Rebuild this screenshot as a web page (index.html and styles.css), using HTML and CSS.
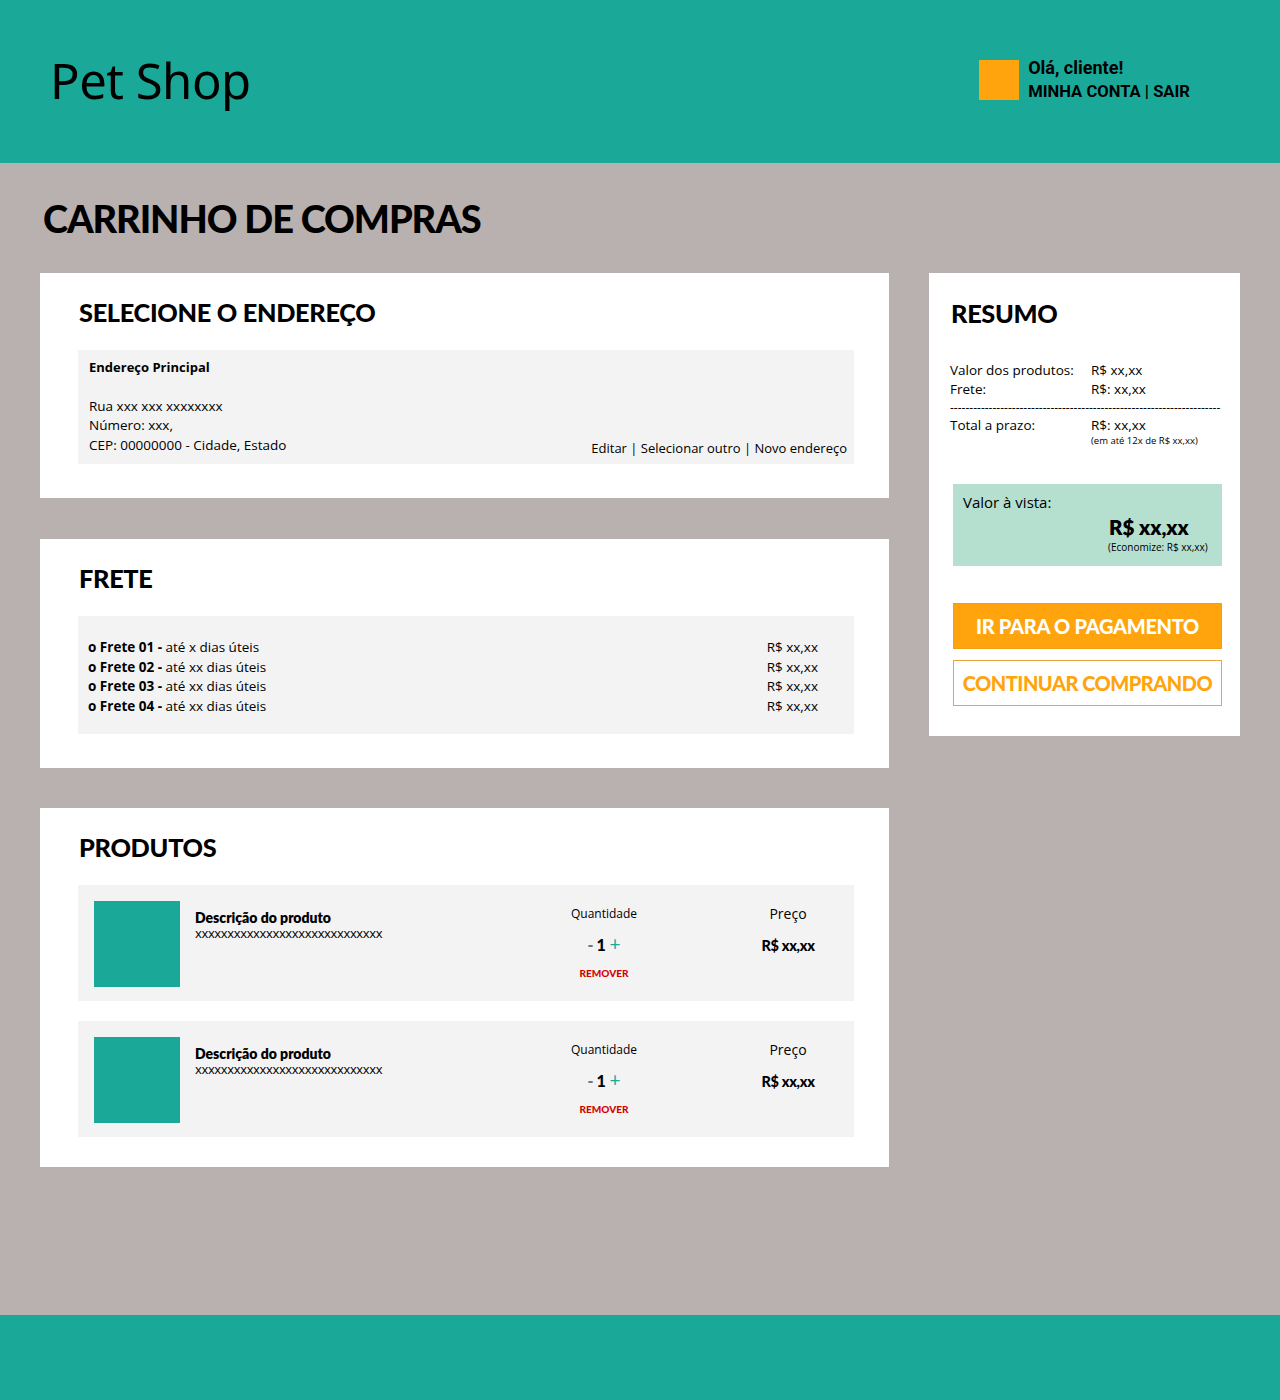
FILE: index.html
```html
<!DOCTYPE html>
<html lang="pt-BR">
<head>
<meta charset="utf-8">
<title>Pet Shop - Carrinho</title>
<link rel="stylesheet" href="styles.css">
</head>
<body>
<header class="topbar">
  <div class="logo">Pet Shop</div>
  <div class="user">
    <div class="avatar"></div>
    <div class="user-text">
      <div>Olá, cliente!</div>
      <div>MINHA CONTA | SAIR</div>
    </div>
  </div>
</header>

<main class="page">
  <h1 class="page-title">CARRINHO DE COMPRAS</h1>
  <div class="layout">
    <div class="left">
      <section class="card">
        <h2 class="card-title">SELECIONE O ENDEREÇO</h2>
        <div class="box address">
          <div class="addr-text">
            <div class="addr-name">Endereço Principal</div>
            <div class="addr-lines">
              <div>Rua xxx xxx xxxxxxxx</div>
              <div>Número: xxx,</div>
              <div>CEP: 00000000 - Cidade, Estado</div>
            </div>
          </div>
          <div class="addr-actions">Editar | Selecionar outro | Novo endereço</div>
        </div>
      </section>

      <section class="card">
        <h2 class="card-title">FRETE</h2>
        <div class="box frete">
          <div class="frete-row"><span><b>o Frete 01 -</b> até x dias úteis</span><span class="frete-price">R$ xx,xx</span></div>
          <div class="frete-row"><span><b>o Frete 02 -</b> até xx dias úteis</span><span class="frete-price">R$ xx,xx</span></div>
          <div class="frete-row"><span><b>o Frete 03 -</b> até xx dias úteis</span><span class="frete-price">R$ xx,xx</span></div>
          <div class="frete-row"><span><b>o Frete 04 -</b> até xx dias úteis</span><span class="frete-price">R$ xx,xx</span></div>
        </div>
      </section>

      <section class="card card-products">
        <h2 class="card-title">PRODUTOS</h2>
        <div class="products">
          <div class="box product">
            <div class="thumb"></div>
            <div class="prod-desc">
              <div class="prod-name">Descrição do produto</div>
              <div class="prod-sub">xxxxxxxxxxxxxxxxxxxxxxxxxxxxx</div>
            </div>
            <div class="qty">
              <div class="col-label">Quantidade</div>
              <div class="qty-ctrl"><span class="minus">-</span>1 <span class="plus">+</span></div>
              <div class="remove">REMOVER</div>
            </div>
            <div class="price">
              <div class="col-label price-label">Preço</div>
              <div class="price-val">R$ xx,xx</div>
            </div>
          </div>
          <div class="box product">
            <div class="thumb"></div>
            <div class="prod-desc">
              <div class="prod-name">Descrição do produto</div>
              <div class="prod-sub">xxxxxxxxxxxxxxxxxxxxxxxxxxxxx</div>
            </div>
            <div class="qty">
              <div class="col-label">Quantidade</div>
              <div class="qty-ctrl"><span class="minus">-</span>1 <span class="plus">+</span></div>
              <div class="remove">REMOVER</div>
            </div>
            <div class="price">
              <div class="col-label price-label">Preço</div>
              <div class="price-val">R$ xx,xx</div>
            </div>
          </div>
        </div>
      </section>
    </div>

    <aside class="card summary">
      <h2 class="card-title summary-title">RESUMO</h2>
      <div class="sum-rows">
        <div class="sum-row"><span>Valor dos produtos:</span><span>R$ xx,xx</span></div>
        <div class="sum-row"><span>Frete:</span><span>R$: xx,xx</span></div>
      </div>
      <div class="dashes">----------------------------------------------------------------------</div>
      <div class="sum-row total"><span>Total a prazo:</span><span>R$: xx,xx<small>(em até 12x de R$ xx,xx)</small></span></div>
      <div class="avista">
        <div class="avista-label">Valor à vista:</div>
        <div class="avista-val">R$ xx,xx</div>
        <div class="avista-save">(Economize: R$ xx,xx)</div>
      </div>
      <button class="btn btn-primary">IR PARA O PAGAMENTO</button>
      <button class="btn btn-outline">CONTINUAR COMPRANDO</button>
    </aside>
  </div>
</main>

<footer class="footer"></footer>
</body>
</html>
```

FILE: styles.css
```css
* { box-sizing: border-box; }
html, body { margin: 0; padding: 0; }
body {
  font-family: "Open Sans", "Noto Sans", sans-serif;
  background: #b9b0b0;
  color: #000;
  min-height: 1400px;
  display: flex;
  flex-direction: column;
}

.topbar {
  background: #1aa999;
  height: 163px;
  display: flex;
  align-items: center;
  justify-content: space-between;
  padding: 0 90px 0 50px;
}
.logo {
  font-family: "Noto Sans", sans-serif;
  font-size: 49px;
  letter-spacing: -0.5px;
  margin-top: -4px;
}
.user { display: flex; align-items: center; gap: 9px; margin-top: -3px; }
.avatar { width: 40px; height: 40px; background: #ffa40d; }
.user-text { font-family: "Roboto", sans-serif; font-weight: 700; font-size: 16.6px; line-height: 24px; }
.user-text div:first-child { font-size: 18px; }

.page { flex: 1; padding: 0 40px 148px; }
.page-title {
  font-family: "Lato", sans-serif;
  font-weight: 900;
  font-size: 38px;
  letter-spacing: -1.1px;
  margin: 0;
  padding: 0 0 0 3px;
  height: 110px;
  display: flex;
  align-items: center;
}

.layout { display: flex; gap: 40px; align-items: flex-start; }
.left { width: 849px; display: flex; flex-direction: column; gap: 40px; }
.left .card:nth-child(2) { margin-top: 1px; }

.card { background: #fff; padding: 25px 35px 34px 38px; }
.card-products { padding-bottom: 30px; }
.card-title {
  font-family: "Lato", sans-serif;
  font-weight: 900;
  font-size: 25.3px;
  letter-spacing: -0.3px;
  margin: 0 0 24px 1px;
  line-height: 28px;
}

.box { background: #f3f3f3; }

.address {
  padding: 8px 7px 9px 11px;
  display: flex;
  justify-content: space-between;
  align-items: flex-end;
  font-size: 13.5px;
  line-height: 19.5px;
}
.addr-name { font-weight: 700; margin-bottom: 19px; font-size: 13px; }
.addr-actions { margin-bottom: -3px; font-size: 13px; }

.frete { padding: 22px 36px 18px 10px; font-size: 13.5px; line-height: 19.5px; }
.frete-row { display: flex; justify-content: space-between; }
.frete-row b { font-weight: 700; }

.products { display: flex; flex-direction: column; gap: 20px; }
.product { display: flex; padding: 16px; align-items: flex-start; height: 116px; }
.thumb { width: 86px; height: 86px; background: #1aa999; flex: none; }
.prod-desc { flex: 1; padding: 8px 0 0 15px; }
.prod-name { font-family: "Lato", sans-serif; font-weight: 800; font-size: 14px; }
.prod-sub { font-size: 13px; letter-spacing: -0.35px; line-height: 14px; }
.qty { width: 166px; flex: none; text-align: center; padding-top: 4px; }
.col-label { font-size: 12px; line-height: 18px; }
.qty-ctrl { font-family: "Lato", sans-serif; font-weight: 900; font-size: 16px; margin-top: 9px; }
.minus { color: #777; margin-right: 3px; }
.plus { color: #1aa999; font-size: 19px; font-weight: 400; }
.remove { font-family: "Lato", sans-serif; font-weight: 900; font-size: 10px; color: #d40000; margin-top: 12px; }
.price { width: 100px; flex: none; margin-left: 51px; text-align: center; }
.price-label { font-size: 14px; line-height: 24px; margin-top: 1px; }
.price-val { font-family: "Lato", sans-serif; font-weight: 900; font-size: 14.5px; letter-spacing: -0.3px; margin-top: 11px; }

.summary { width: 311px; padding: 26px 17px 30px 21px; }
.summary-title { margin-bottom: 34px; }
.sum-rows { font-size: 13.5px; line-height: 19px; }
.sum-row { display: flex; }
.sum-row span:first-child { width: 141px; flex: none; }
.dashes { font-size: 12px; line-height: 10px; overflow: visible; white-space: nowrap; margin: 4px 0 3px; }
.total { font-size: 13.5px; line-height: 19px; }
.total small { display: block; font-size: 9.5px; line-height: 11px; }
.avista { margin: 38px 0 0 3px; background: #b5dfcf; width: 269px; height: 82px; padding: 8px 10px; }
.avista-label { font-size: 15px; line-height: 20px; }
.avista-val { font-family: "Lato", sans-serif; font-weight: 800; font-size: 20.5px; margin: 2px 0 0 146px; line-height: 26px; }
.avista-save { font-size: 10px; margin-left: 145px; line-height: 14px; white-space: nowrap; }

.btn {
  display: block;
  width: 269px;
  height: 46px;
  margin-left: 3px;
  font-family: "Lato", sans-serif;
  font-weight: 900;
  font-size: 20px;
  letter-spacing: -0.3px;
  cursor: pointer;
}
.btn-primary { background: #ffa40d; color: #fff; border: 1px solid #f3a010; margin-top: 37px; }
.btn-outline { background: #fff; color: #ffa40d; border: 1px solid #e9a43a; margin-top: 11px; letter-spacing: -0.5px; }

.footer { background: #1aa999; height: 85px; }
```
